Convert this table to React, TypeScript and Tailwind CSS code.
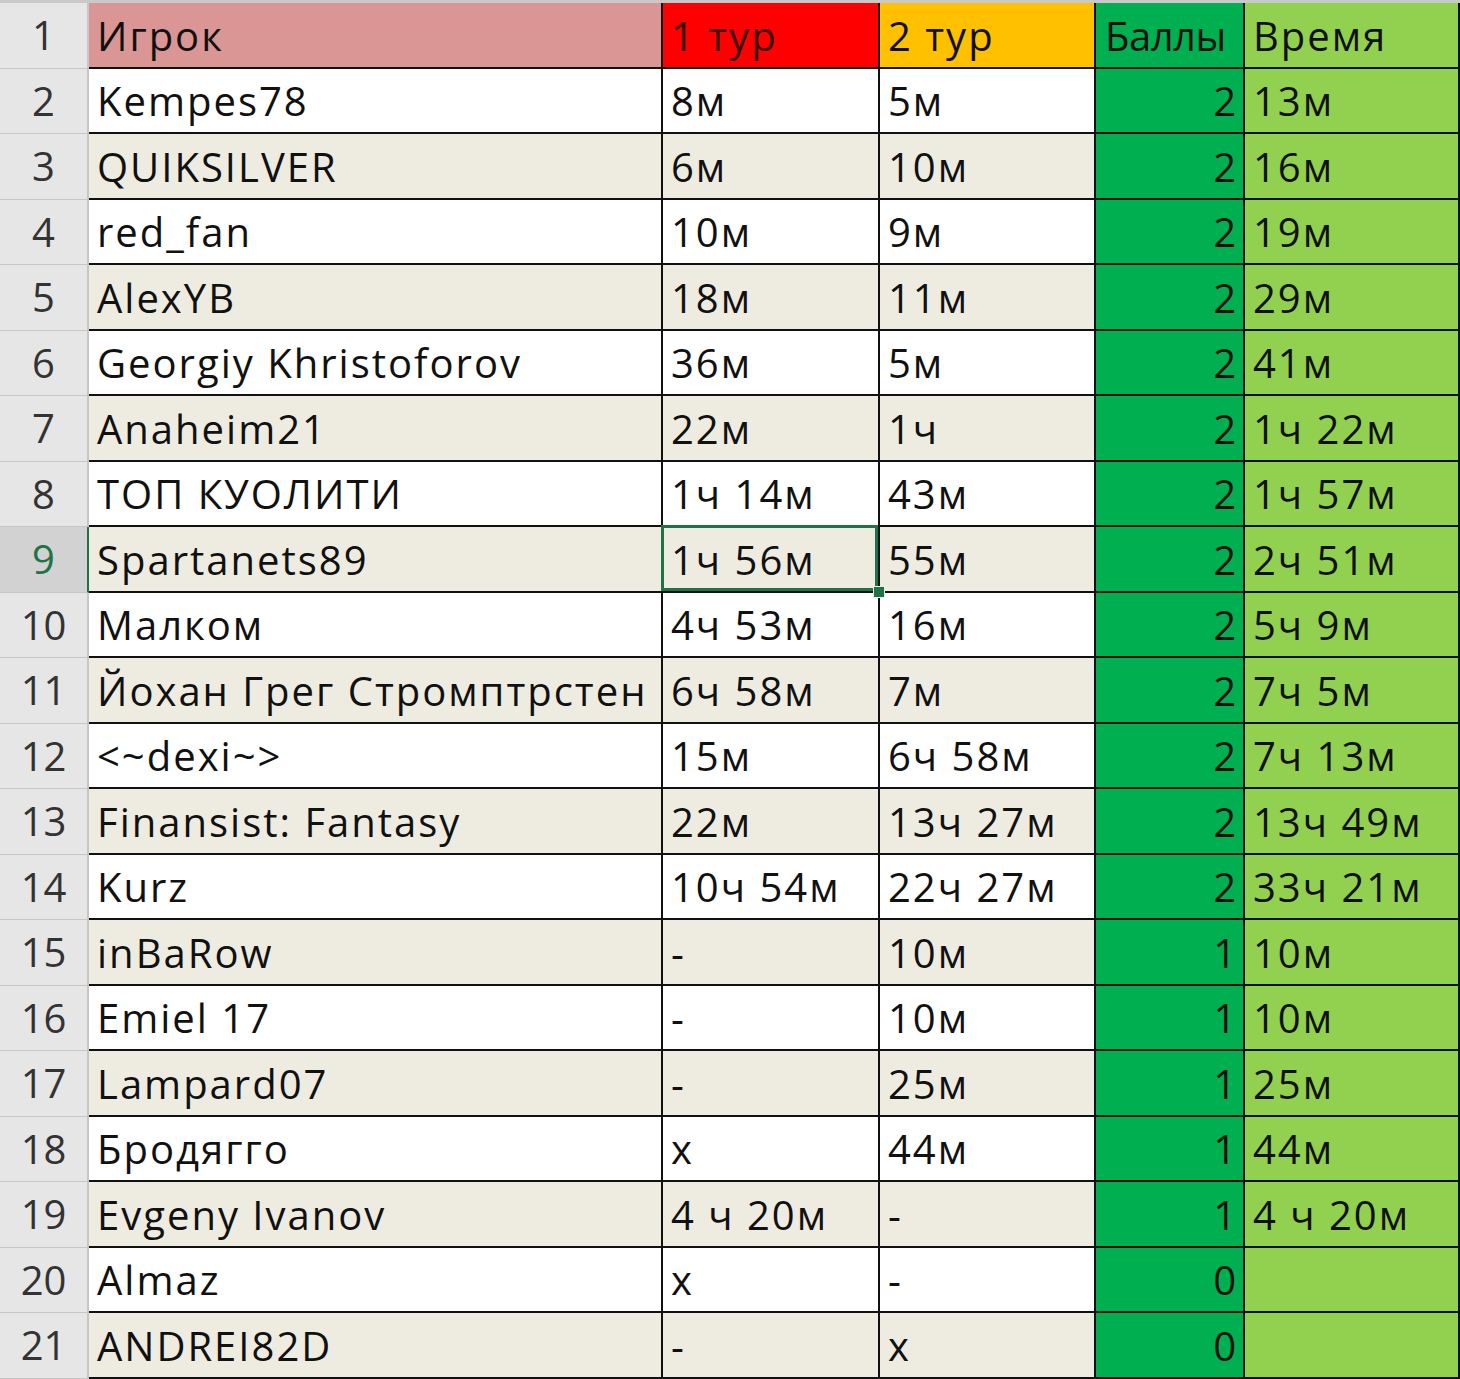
import React from "react";

type Row = [string, string, string, string, string];

const rows: Row[] = [
  ["Kempes78", "8м", "5м", "2", "13м"],
  ["QUIKSILVER", "6м", "10м", "2", "16м"],
  ["red_fan", "10м", "9м", "2", "19м"],
  ["AlexYB", "18м", "11м", "2", "29м"],
  ["Georgiy Khristoforov", "36м", "5м", "2", "41м"],
  ["Anaheim21", "22м", "1ч", "2", "1ч 22м"],
  ["ТОП КУОЛИТИ", "1ч 14м", "43м", "2", "1ч 57м"],
  ["Spartanets89", "1ч 56м", "55м", "2", "2ч 51м"],
  ["Малком", "4ч 53м", "16м", "2", "5ч 9м"],
  ["Йохан Грег Стромптрстен", "6ч 58м", "7м", "2", "7ч 5м"],
  ["<~dexi~>", "15м", "6ч 58м", "2", "7ч 13м"],
  ["Finansist: Fantasy", "22м", "13ч 27м", "2", "13ч 49м"],
  ["Kurz", "10ч 54м", "22ч 27м", "2", "33ч 21м"],
  ["inBaRow", "-", "10м", "1", "10м"],
  ["Emiel 17", "-", "10м", "1", "10м"],
  ["Lampard07", "-", "25м", "1", "25м"],
  ["Бродягго", "x", "44м", "1", "44м"],
  ["Evgeny Ivanov", "4 ч 20м", "-", "1", "4 ч 20м"],
  ["Almaz", "x", "-", "0", ""],
  ["ANDREI82D", "-", "x", "0", ""],
];

const grid = "grid grid-cols-[89px_574px_217px_216px_149px_215px] h-[65.5px]";
const base = "flex items-center whitespace-nowrap border-b-2 border-r-2 border-[#111] pl-2 pt-[2px] leading-none";
const cell = `${base} overflow-hidden tracking-[2px]`;

export default function App() {
  return (
    <div className="w-[1460px] h-[1379px] overflow-hidden bg-white text-[40px] font-medium text-[#111] font-['Open_Sans','Noto_Sans',sans-serif]">
      <div className="h-[3px] bg-[#c9c9c9]" />

      {/* header row */}
      <div className={grid}>
        <div className="flex items-center justify-center border-b border-r-2 border-[#c6c6c6] bg-[#e6e6e6] text-[#333]">1</div>
        <div className={`${cell} bg-[#da9694]`}>Игрок</div>
        <div className={`${cell} bg-[#ff0000] text-[#3a0000]`}>1 тур</div>
        <div className={`${cell} bg-[#ffc000]`}>2 тур</div>
        <div className={`${base} overflow-hidden bg-[#00b050] pl-[9px] tracking-[-0.5px]`}>Баллы</div>
        <div className={`${cell} bg-[#92d050] pl-1 border-r-0`}>Время</div>
      </div>

      {rows.map((r, i) => {
        const n = i + 2;
        const beige = n % 2 === 1;
        const bg = beige ? "bg-[#eeece1]" : "bg-white";
        const sel = n === 9;
        return (
          <div key={n} className={grid}>
            <div
              className={
                sel
                  ? "flex items-center justify-center border-b border-r-2 border-b-[#c6c6c6] border-r-[#217346] bg-[#d2d2d2] text-[#217346]"
                  : "flex items-center justify-center border-b border-r-2 border-[#c6c6c6] bg-[#e6e6e6] text-[#333]"
              }
            >
              {n}
            </div>
            <div className={`${cell} ${bg}`}>{r[0]}</div>
            {sel ? (
              <div className={`${base} tracking-[2px] ${bg} relative z-10`}>
                {r[1]}
                <div className="absolute -left-[2px] -top-[2px] right-0 bottom-0 border-[3px] border-[#217346]" />
                <div className="absolute -right-[7px] -bottom-[7px] w-[12px] h-[12px] bg-[#217346] border border-[#e8f0ea]" />
              </div>
            ) : (
              <div className={`${cell} ${bg}`}>{r[1]}</div>
            )}
            <div className={`${cell} ${bg}`}>{r[2]}</div>
            <div className={`${base} overflow-hidden bg-[#00b050] justify-end pr-[7px]`}>{r[3]}</div>
            <div className={`${cell} bg-[#92d050] pl-1 border-r-0`}>{r[4]}</div>
          </div>
        );
      })}
    </div>
  );
}
